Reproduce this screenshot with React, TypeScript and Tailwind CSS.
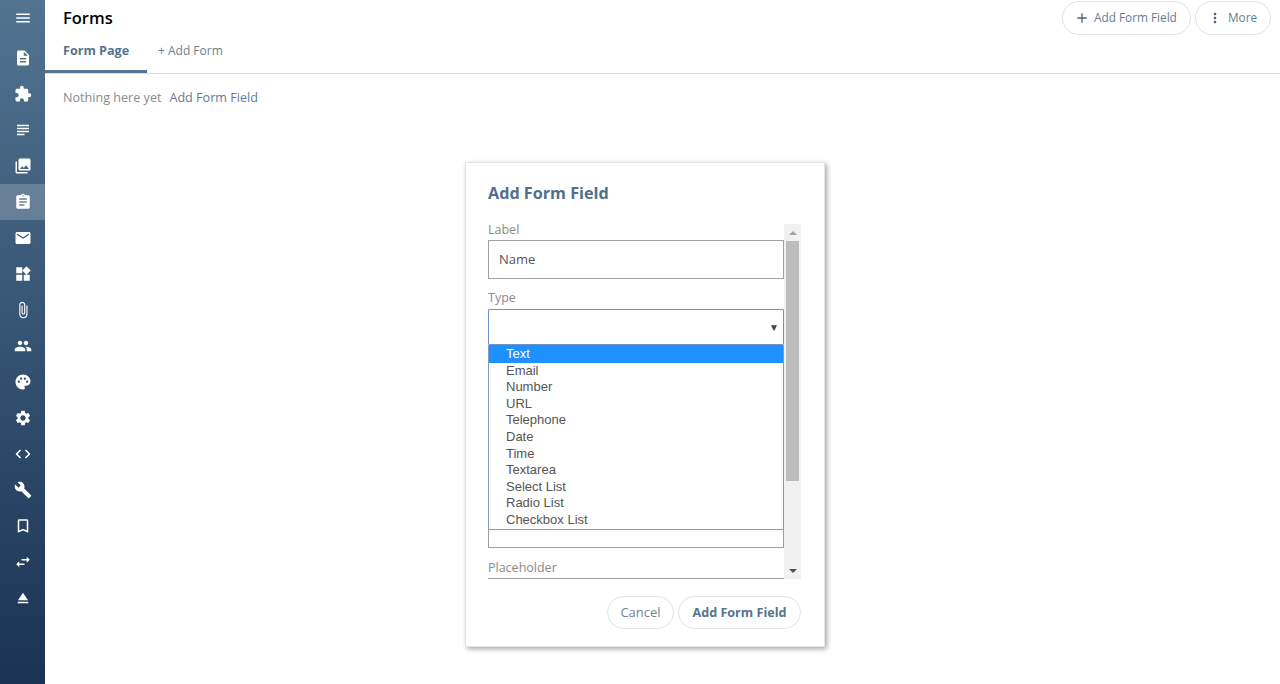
import React from 'react';
import {
  MdMenu,
  MdDescription,
  MdExtension,
  MdSubject,
  MdPhotoLibrary,
  MdAssignment,
  MdEmail,
  MdWidgets,
  MdAttachFile,
  MdPeople,
  MdPalette,
  MdSettings,
  MdCode,
  MdBuild,
  MdBookmarkBorder,
  MdSwapHoriz,
  MdEject,
  MdAdd,
  MdMoreVert
} from 'react-icons/md';

const navIcons = [
  MdDescription,
  MdExtension,
  MdSubject,
  MdPhotoLibrary,
  MdAssignment,
  MdEmail,
  MdWidgets,
  MdAttachFile,
  MdPeople,
  MdPalette,
  MdSettings,
  MdCode,
  MdBuild,
  MdBookmarkBorder,
  MdSwapHoriz,
  MdEject
];

const fieldTypes = [
  'Email',
  'Number',
  'URL',
  'Telephone',
  'Date',
  'Time',
  'Textarea',
  'Select List',
  'Radio List',
  'Checkbox List'
];

const Sidebar = () => (
  <nav className="w-[45px] h-[684px] shrink-0 flex flex-col bg-gradient-to-b from-[#527491] to-[#1a3354] text-white">
    <div className="h-[40px] pb-[4px] flex items-center justify-center">
      <MdMenu size={18} />
    </div>
    {navIcons.map((Icon, index) => (
      <div
        key={index}
        className={`h-[36px] flex items-center justify-center ${index === 4 ? 'bg-white/20' : ''}`}
      >
        <Icon size={18} />
      </div>
    ))}
  </nav>
);

const PillButton = ({ children, className }: { children: React.ReactNode; className: string }) => (
  <button className={`h-[34px] rounded-full border border-[#dfe3e6] bg-white flex items-center text-[11.8px] text-[#5f7d98] ${className}`}>
    {children}
  </button>
);

const Header = () => (
  <header className="h-[74px] border-b border-[#dcdcdc] flex justify-between relative">
    <div className="flex flex-col">
      <h1 className="pl-[18px] pt-[7px] h-[36px] text-[16.5px] leading-[22px] font-semibold text-black">Forms</h1>
      <div className="flex items-start">
        <div className="w-[102px] h-[37px] pl-[18px] pt-[6px] border-b-[3px] border-[#54748f] text-[12.6px] leading-[18px] font-bold text-[#54748f]">
          Form Page
        </div>
        <div className="pl-[11px] pt-[6px] text-[12px] leading-[18px] text-[#6d7f8f]">+ Add Form</div>
      </div>
    </div>
    <div className="flex gap-[4px] pr-[9px] pt-[1px]">
      <PillButton className="w-[129px] pl-[11px] gap-[4px]">
        <MdAdd size={16} className="text-[#45637e]" />
        Add Form Field
      </PillButton>
      <PillButton className="w-[76px] pl-[11px] gap-[5px]">
        <MdMoreVert size={16} className="text-[#45637e]" />
        More
      </PillButton>
    </div>
  </header>
);

const FieldLabel = ({ children, className }: { children: React.ReactNode; className?: string }) => (
  <div className={`text-[12.5px] text-[#8a8a8a] ${className ?? ''}`}>{children}</div>
);

const Dropdown = () => (
  <div className="absolute left-0 top-[36px] w-[296px] h-[185px] bg-white border-x border-b border-[#7f9bbd] font-['Liberation_Sans',sans-serif] text-[13px] text-[#555]">
    <div className="h-[17.8px] pl-[17px] leading-[17px] bg-[#1e90ff] text-white">Text</div>
    {fieldTypes.map(type => (
      <div key={type} className="h-[16.55px] pl-[17px] leading-[15.5px]">{type}</div>
    ))}
  </div>
);

const Scrollbar = () => (
  <div className="w-[17px] h-[355px] bg-[#f1f1f1] flex flex-col items-center">
    <div className="h-[17px] flex items-center justify-center">
      <div className="border-x-[4px] border-x-transparent border-b-[4px] border-b-[#a3a3a3]" />
    </div>
    <div className="w-[13px] h-[240px] bg-[#bdbdbd]" />
    <div className="flex-1" />
    <div className="h-[17px] flex items-center justify-center">
      <div className="border-x-[4px] border-x-transparent border-t-[4px] border-t-[#505050]" />
    </div>
  </div>
);

const AddFieldModal = () => (
  <div className="absolute left-[465px] top-[162px] w-[360px] h-[485px] bg-white border border-[#e4e4e4] shadow-[2px_2px_5px_rgba(0,0,0,0.35)] pl-[22px] pr-[23px] pt-[19px]">
    <h2 className="text-[16.2px] leading-[22px] font-bold text-[#4f6f8c] mb-[20px]">Add Form Field</h2>
    <div className="flex items-start h-[355px]">
      <div className="w-[296px] h-[357px] -mt-[2px] overflow-hidden relative">
        <FieldLabel className="h-[18px] leading-[16px]">Label</FieldLabel>
        <input
          readOnly
          value="Name"
          className="block w-[296px] h-[39px] border border-[#a0a0a0] px-[10px] pb-[2px] text-[13px] text-[#555] outline-none"
        />
        <FieldLabel className="mt-[10px] h-[20px] leading-[18px]">Type</FieldLabel>
        <div className="relative">
          <div className="w-[296px] h-[36px] border border-[#6f90c8] rounded-[1px] flex items-center justify-end pr-[4px] text-[10px] text-[#444]">▼</div>
          <Dropdown />
        </div>
        <div className="h-[203px] border-x border-b border-[#a0a0a0]" />
        <FieldLabel className="mt-[11px] h-[20px] pt-[1px] leading-[16px] border-b border-[#a0a0a0]">Placeholder</FieldLabel>
      </div>
      <Scrollbar />
    </div>
    <div className="flex justify-end gap-[4px] mt-[17px]">
      <button className="w-[67px] h-[33px] rounded-full border border-[#dfe3e6] text-[13px] text-[#6f8497]">Cancel</button>
      <button className="w-[123px] h-[33px] pt-[1px] rounded-full border border-[#dfe3e6] text-[12.6px] font-bold text-[#54748f]">Add Form Field</button>
    </div>
  </div>
);

const App = () => (
  <div className="w-[1280px] h-[684px] overflow-hidden relative flex bg-white font-['Open_Sans',sans-serif]">
    <Sidebar />
    <main className="flex-1">
      <Header />
      <p className="pl-[18px] pt-[15px] text-[12.6px] leading-[18px] text-[#8a8a8a]">
        Nothing here yet
        <span className="ml-[8px] text-[#5f7c96]">Add Form Field</span>
      </p>
    </main>
    <AddFieldModal />
  </div>
);

export default App;
